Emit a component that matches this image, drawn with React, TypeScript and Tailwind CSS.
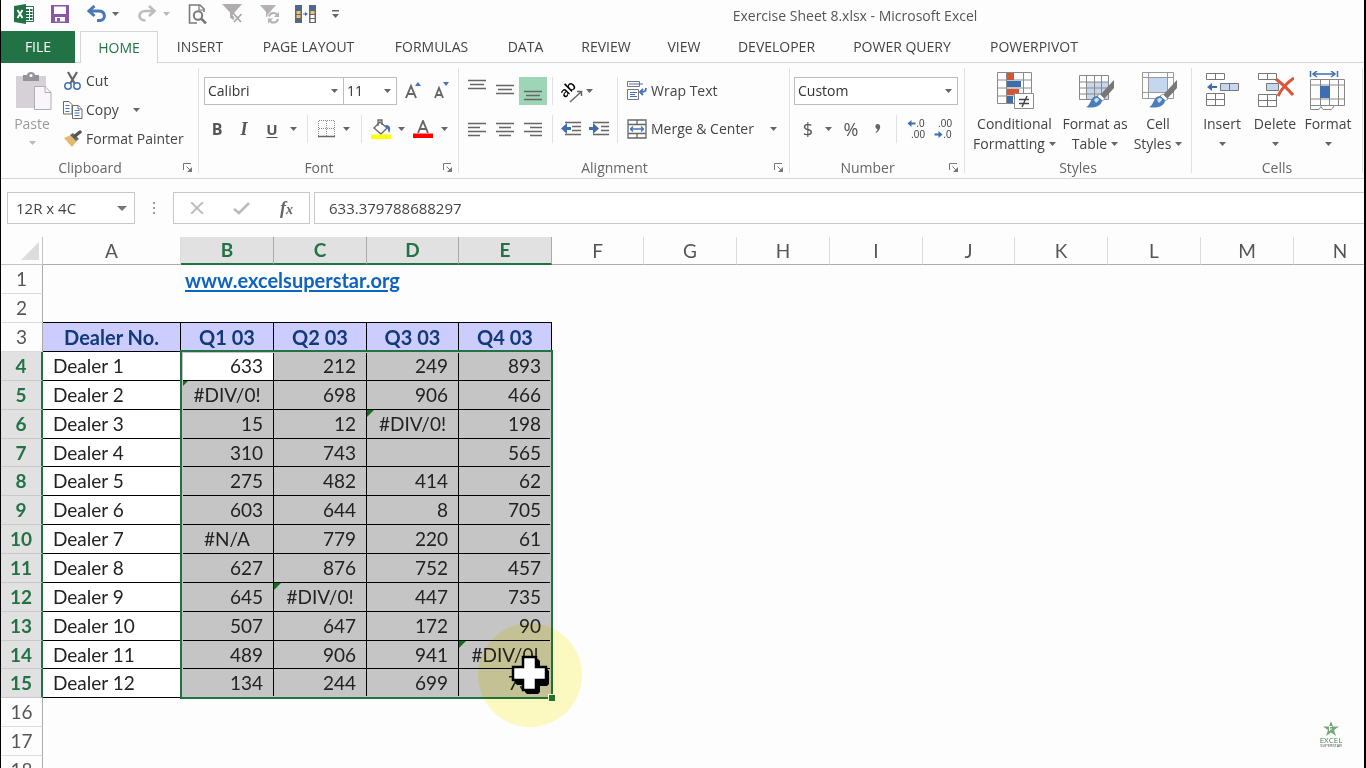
import type { ReactNode } from "react";

const TABS = [
  { label: "INSERT", width: "w-[84px]" },
  { label: "PAGE LAYOUT", width: "w-[133px]" },
  { label: "FORMULAS", width: "w-[113px]" },
  { label: "DATA", width: "w-[75px]" },
  { label: "REVIEW", width: "w-[86px]" },
  { label: "VIEW", width: "w-[70px]" },
  { label: "DEVELOPER", width: "w-[115px]" },
  { label: "POWER QUERY", width: "w-[136px]" },
  { label: "POWERPIVOT", width: "w-[128px]" },
];

const COLUMNS = [
  { name: "A", width: "w-[138px]" },
  { name: "B", width: "w-[93px]" },
  { name: "C", width: "w-[93px]" },
  { name: "D", width: "w-[92px]" },
  { name: "E", width: "w-[93px]" },
  { name: "F", width: "w-[92px]" },
  { name: "G", width: "w-[93px]" },
  { name: "H", width: "w-[93px]" },
  { name: "I", width: "w-[93px]" },
  { name: "J", width: "w-[92px]" },
  { name: "K", width: "w-[93px]" },
  { name: "L", width: "w-[93px]" },
  { name: "M", width: "w-[93px]" },
  { name: "N", width: "w-[93px]" },
];

const DEALERS = [
  ["633", "212", "249", "893"],
  ["#DIV/0!", "698", "906", "466"],
  ["15", "12", "#DIV/0!", "198"],
  ["310", "743", "", "565"],
  ["275", "482", "414", "62"],
  ["603", "644", "8", "705"],
  ["#N/A", "779", "220", "61"],
  ["627", "876", "752", "457"],
  ["645", "#DIV/0!", "447", "735"],
  ["507", "647", "172", "90"],
  ["489", "906", "941", "#DIV/0!"],
  ["134", "244", "699", "735"],
];

const Caret = ({ faded = false }: { faded?: boolean }) => (
  <svg width="7" height="4" viewBox="0 0 7 4" className={faded ? "fill-[#b9b9b9]" : "fill-[#666]"}>
    <path d="M0 0h7L3.5 4z" />
  </svg>
);

const CaretButton = ({ label, width }: { label: string; width: string }) => (
  <button aria-label={label} className={`flex h-7 shrink-0 items-center justify-center ${width}`}>
    <Caret />
  </button>
);

const IconButton = ({ label, className, children }: { label: string; className: string; children: ReactNode }) => (
  <button aria-label={label} className={`flex h-7 shrink-0 items-center justify-center ${className}`}>
    {children}
  </button>
);

const Rule = ({ width }: { width: string }) => (
  <div className={`flex h-7 shrink-0 justify-center ${width}`}>
    <div className="w-px bg-[#e1e1e4]" />
  </div>
);

const Group = ({
  label,
  width,
  launcher = false,
  children,
}: {
  label: string;
  width: string;
  launcher?: boolean;
  children: ReactNode;
}) => (
  <section aria-label={label} className={`flex shrink-0 flex-col ${width}`}>
    <div className="h-[95px]">{children}</div>
    <div className="flex h-5 items-center">
      <div className={`flex-1 text-center text-sm leading-5 text-[#666] ${launcher ? "pr-1" : ""}`}>{label}</div>
      {launcher && (
        <button aria-label={`${label} settings`} className="w-[15px]">
          <svg width="10" height="10" viewBox="0 0 10 10" fill="none" stroke="#777">
            <path d="M.5 7V.5H8M3.5 3.5l4 4" />
            <path d="M9 4v5H4z" fill="#777" stroke="none" />
          </svg>
        </button>
      )}
    </div>
  </section>
);

const Divider = () => <div className="mt-[5px] mb-[5px] w-px shrink-0 bg-[#e1e1e4]" />;

/* Quick access toolbar */

const QuickAccess = () => (
  <div className="flex w-[345px] shrink-0 items-center pb-1">
    <svg className="ml-[13px] shrink-0" width="20" height="20" viewBox="0 0 20 20">
      <path d="M11 2.5h8.500v15H11z" fill="#fff" stroke="#217346" />
      <path d="M12 5h3v2h-3zM16 5h2.500v2H16zM12 8h3v2h-3zM16 8h2.500v2H16zM12 11h3v2h-3zM16 11h2.500v2H16zM12 14h3v2h-3zM16 14h2.500v2H16z" fill="#217346" />
      <path d="M0 2 12 0v20L0 18z" fill="#217346" />
      <path d="M3.500 6 8.500 14M8.500 6 3.500 14" stroke="#fff" strokeWidth="1.800" />
    </svg>
    <button aria-label="Save" className="ml-[17px] shrink-0">
      <svg width="18" height="18" viewBox="0 0 18 18">
        <path d="M0 0h18v18H0z" fill="#8a56a8" />
        <path d="M3 1.500h12V9H3z" fill="#fdfdfe" />
        <path d="M4 12h10v4.500H4z" fill="#fdfdfe" />
        <path d="M6 13h3v3.500H6z" fill="#8a56a8" />
      </svg>
    </button>
    <button aria-label="Undo" className="ml-[18px] shrink-0">
      <svg width="20" height="18" viewBox="0 0 20 18" fill="none" stroke="#4a78b5" strokeWidth="3">
        <path d="M2 6h9.500c7 0 8 8 2 9.500H10" />
        <path d="M7.500 1 2 6l5.500 5" />
      </svg>
    </button>
    <button aria-label="Undo history" className="ml-1 flex w-[9px] shrink-0 justify-center"><Caret /></button>
    <button aria-label="Redo" className="ml-[17px] shrink-0">
      <svg width="20" height="18" viewBox="0 0 20 18" fill="none" stroke="#bcbcbc" strokeWidth="2.600">
        <path d="M17 6H8.500c-8 0-8 9.500 0 9.500" />
        <path d="M12 1l5.500 5-5.500 5" />
      </svg>
    </button>
    <button aria-label="Redo history" className="ml-[5px] flex w-[9px] shrink-0 justify-center"><Caret faded /></button>
    <button aria-label="Print preview" className="ml-[17px] shrink-0">
      <svg width="20" height="20" viewBox="0 0 20 20" fill="none" stroke="#7a7a7a">
        <path d="M16 8V5l-4-4H1.500v18H9" strokeWidth="1.600" />
        <path d="M11 1v5h5" strokeWidth="1.200" />
        <circle cx="10" cy="11.500" r="4.200" strokeWidth="2" />
        <path d="m13 14.500 5 5" strokeWidth="2.600" />
      </svg>
    </button>
    <button aria-label="Clear filter" className="ml-[14px] shrink-0">
      <svg width="22" height="20" viewBox="0 0 22 20">
        <path d="M0 0h20l-7.500 8.500V17L8 13.500v-5z" fill="#b0acb0" />
        <path d="m12 10 7 8M19.500 10 12 18" stroke="#fdfdfe" strokeWidth="4" />
        <path d="m12 10 7 8M19.500 10 12 18" stroke="#a9a6a9" strokeWidth="1.800" />
      </svg>
    </button>
    <button aria-label="Reapply filter" className="ml-4 shrink-0">
      <svg width="21" height="20" viewBox="0 0 21 20">
        <path d="M0 1h16l-6 7v7l-4-2.500V8z" fill="#b5b1b5" />
        <circle cx="13.500" cy="13.500" r="6.500" fill="#fdfdfe" />
        <path d="M9 12.500c1-4.500 7-4.500 8.500-1M18 15c-1 4.500-7 4.500-8.500 1" fill="none" stroke="#b5b1b5" strokeWidth="2" />
        <path d="M19 8v5h-5zM8 19.500v-5h5z" fill="#b5b1b5" />
      </svg>
    </button>
    <button aria-label="Compare columns" className="ml-[14px] shrink-0">
      <svg width="22" height="18" viewBox="0 0 22 18">
        <path d="M0 0h7v18H0zM14 0h7v18h-7z" fill="#666" />
        <path d="M1 1h5v4H1zM15 1h5v4h-5z" fill="#46689b" />
        <path d="M1.500 6h4v3h-4zM1.500 10h4v3h-4zM15.500 6h4v3h-4z" fill="#eac37b" />
        <path d="M1.500 14h4v3h-4z" fill="#46689b" />
        <path d="M15.500 10h4v3h-4zM15.500 14h4v3h-4z" fill="#fff" />
        <path d="M8 8.500h2V7l3 2-3 2V9.500H8z" fill="#3d6fb0" />
      </svg>
    </button>
    <button aria-label="Customize toolbar" className="ml-[14px] shrink-0">
      <svg width="9" height="8" viewBox="0 0 9 8" fill="#666">
        <path d="M1 0h7v1.500H1zM1 4h7L4.500 8z" />
      </svg>
    </button>
  </div>
);

/* Ribbon groups */

const ClipboardGroup = () => (
  <Group label="Clipboard" width="w-[197px]" launcher>
    <div className="flex">
      <button className="flex w-[62px] flex-col items-center pt-[9px] text-sm leading-5 text-[#9a9a9a]">
        <svg className="ml-1" width="36" height="40" viewBox="0 0 36 40">
          <path d="M0 4h30v32H0z" fill="#d5d1d6" />
          <path d="M7 9V3h4c0-4 8-4 8 0h4v6z" fill="#96929a" />
          <circle cx="15" cy="3.500" r="1.500" fill="#fff" />
          <path d="M18.500 14.500H29l6 6v17H18.500z" fill="#faf4fb" stroke="#b2adb4" />
          <path d="M29 14.500v6h6" fill="none" stroke="#b2adb4" />
        </svg>
        <span className="mt-[2px]">Paste</span>
        <span className="mt-[7px]"><Caret faded /></span>
      </button>
      <div className="flex flex-col pt-[3px] text-sm text-[#444]">
        <button className="flex h-[29px] items-center gap-[3px]">
          <svg width="20" height="20" viewBox="0 0 20 20" fill="none">
            <path d="m5 1 7 12M14 1 7 13" stroke="#666" strokeWidth="2.200" />
            <circle cx="5" cy="15" r="3.200" stroke="#4472b8" strokeWidth="1.500" />
            <circle cx="14" cy="15" r="3.200" stroke="#4472b8" strokeWidth="1.500" />
          </svg>
          Cut
        </button>
        <div className="flex h-[29px] items-center">
          <button className="flex items-center gap-[3px]">
            <svg width="20" height="18" viewBox="0 0 20 18" fill="#fff" stroke="#6b6b6b">
              <path d="M.5.500H6l3 3V13H.5z" />
              <path d="M9.500 4.500h6l3.500 3.500v9.500H9.500z" />
              <path d="M15 4.500V8h4" />
              <path d="M2.500 4.500h4M2.500 7.500h4M2.500 10.500h4M11.500 9.500h5M11.500 12h5M11.500 14.500h5" stroke="#4472b8" />
            </svg>
            Copy
          </button>
          <CaretButton label="Copy options" width="ml-[6px] w-6" />
        </div>
        <button className="flex h-[29px] items-center gap-[3px] whitespace-nowrap">
          <svg width="20" height="18" viewBox="0 0 20 18">
            <path d="m1 8 7-3 6 6-5 6z" fill="#e5b96c" />
            <path d="m7 5 3-2 6 6-3 2z" fill="#666" />
            <path d="m12 6 5-4" stroke="#555" strokeWidth="3.500" strokeLinecap="round" />
          </svg>
          Format Painter
        </button>
      </div>
    </div>
  </Group>
);

const FontGroup = () => (
  <Group label="Font" width="w-[259px]" launcher>
    <div className="flex flex-col gap-[10px] pt-[14px] pl-[5px] text-[#555]">
      <div className="flex items-center">
        <Picker label="Font name" value="Calibri" width="w-[140px]" />
        <Picker label="Font size" value="11" width="-ml-px w-[54px]" />
        <IconButton label="Increase font size" className="ml-[3px] w-7">
          <svg width="18" height="18" viewBox="0 0 18 18" fill="none">
            <path d="M1 16 6 4l5 12M3 12h6" stroke="#666" strokeWidth="1.900" />
            <path d="M10 4h6l-3-4z" fill="#4472b8" />
          </svg>
        </IconButton>
        <IconButton label="Decrease font size" className="w-7">
          <svg width="18" height="18" viewBox="0 0 18 18" fill="none">
            <path d="M2 16 6 6l4 10M3.500 13h5" stroke="#666" strokeWidth="1.800" />
            <path d="M10 0h6l-3 4z" fill="#4472b8" />
          </svg>
        </IconButton>
      </div>
      <div className="flex items-center">
        <IconButton label="Bold" className="w-[26px] text-base font-bold">B</IconButton>
        <IconButton label="Italic" className="w-7 font-['Liberation_Serif',serif] text-lg font-bold italic">I</IconButton>
        <IconButton label="Underline" className="w-7 text-[15px] font-bold underline underline-offset-2">U</IconButton>
        <CaretButton label="Underline style" width="w-[14px]" />
        <Rule width="w-[14px]" />
        <IconButton label="Borders" className="w-[25px]">
          <svg width="18" height="18" viewBox="0 0 18 18" fill="none" stroke="#888">
            <path d="M.5 1v15M8.500 1v15M16.500 1v15M1 .5h16M1 8.500h16" strokeDasharray="1 1" />
            <path d="M0 16.500h17" stroke="#666" strokeWidth="1.500" />
          </svg>
        </IconButton>
        <CaretButton label="Border style" width="w-[15px]" />
        <Rule width="w-[14px]" />
        <IconButton label="Fill color" className="w-[26px]">
          <svg width="20" height="20" viewBox="0 0 20 20">
            <path d="M3 9 9 3l7 6-6 6z" fill="#fff" stroke="#666" strokeWidth="1.300" />
            <path d="M7 7V1h4v5" fill="none" stroke="#666" strokeWidth="1.300" />
            <path d="M14 6c6-1 6 5 4 8-1-4-2-5-4-8z" fill="#4472b8" />
            <path d="M0 15.500h20V20H0z" fill="#ff0" />
          </svg>
        </IconButton>
        <CaretButton label="Fill color options" width="w-[14px]" />
        <IconButton label="Font color" className="w-[30px]">
          <svg width="20" height="18" viewBox="0 0 20 18">
            <path d="m5 13 5-12 5 12M7 9h6" fill="none" stroke="#666" strokeWidth="1.900" />
            <path d="M0 13.500h20V18H0z" fill="red" />
          </svg>
        </IconButton>
        <CaretButton label="Font color options" width="w-[12px]" />
      </div>
    </div>
  </Group>
);

const Picker = ({ label, value, width }: { label: string; value: string; width: string }) => (
  <div className={`relative h-7 shrink-0 ${width}`}>
    <select aria-label={label} className="h-full w-full appearance-none border border-[#bdbdbd] bg-white pl-[3px] text-sm text-[#333]">
      <option>{value}</option>
    </select>
    <span className="pointer-events-none absolute top-3 right-[6px]"><Caret /></span>
  </div>
);

const Lines = ({ d }: { d: string }) => (
  <svg width="18" height="16" viewBox="0 0 18 16" stroke="#666" strokeWidth="1.300">
    <path d={d} />
  </svg>
);

const AlignmentGroup = () => (
  <Group label="Alignment" width="w-[330px]" launcher>
    <div className="flex pt-[14px] pl-1">
      <div className="flex w-[148px] flex-col gap-[10px]">
        <div className="flex">
          <IconButton label="Top align" className="w-7 pb-3"><Lines d="M0 3.500h18M2 7.500h14M0 11.500h18" /></IconButton>
          <IconButton label="Middle align" className="w-7 pb-1"><Lines d="M0 4.500h18M2 8.500h14M0 12.500h18" /></IconButton>
          <IconButton label="Bottom align" className="w-7 bg-[#9fd5b7] pt-2"><Lines d="M0 4.500h18M2 8.500h14M0 12.500h18" /></IconButton>
          <Rule width="w-[10px]" />
          <IconButton label="Orientation" className="w-7">
            <div className="relative flex size-6 items-center">
              <span className="-mt-1 -rotate-45 text-sm leading-4 font-semibold">ab</span>
              <svg className="absolute right-0 bottom-0" width="15" height="14" viewBox="0 0 15 14">
                <path d="M2 13 13 3M9 2.500h4.500V7" fill="none" stroke="#666" strokeWidth="1.500" />
              </svg>
            </div>
          </IconButton>
          <CaretButton label="Orientation options" width="w-2" />
        </div>
        <div className="flex">
          <IconButton label="Align left" className="w-7"><Lines d="M0 2.500h18M0 6.500h12M0 10.500h18M0 14.500h12" /></IconButton>
          <IconButton label="Center" className="w-7"><Lines d="M0 2.500h18M3 6.500h12M0 10.500h18M3 14.500h12" /></IconButton>
          <IconButton label="Align right" className="w-7"><Lines d="M0 2.500h18M6 6.500h12M0 10.500h18M6 14.500h12" /></IconButton>
          <Rule width="w-[10px]" />
          <IconButton label="Decrease indent" className="w-7">
            <svg width="20" height="16" viewBox="0 0 20 16">
              <path d="M4 1.500h16M11 5.500h9M11 9.500h9M4 13.500h16" stroke="#666" strokeWidth="1.300" />
              <path d="M0 7.500 6 2v4h4v3H6v4z" fill="#3d6fb0" />
            </svg>
          </IconButton>
          <IconButton label="Increase indent" className="w-7">
            <svg width="20" height="16" viewBox="0 0 20 16">
              <path d="M4 1.500h16M12 5.500h8M12 9.500h8M4 13.500h16" stroke="#666" strokeWidth="1.300" />
              <path d="M10 7.500 4 2v4H0v3h4v4z" fill="#3d6fb0" />
            </svg>
          </IconButton>
        </div>
      </div>
      <div className="mr-[9px] ml-[6px] w-px bg-[#e1e1e4]" />
      <div className="flex flex-col gap-[10px] text-sm text-[#444]">
        <button className="flex h-7 items-center gap-1">
          <svg width="20" height="20" viewBox="0 0 20 20" fill="none" stroke="#777">
            <path d="M.5.500h12v5H.5zM.5 8.500h11v10H.5z" />
            <path d="M2 3h14M3 11.500h7M3 13.500h5M3 15.500h7" stroke="#4472b8" />
            <path d="M19 7c0 4-2 4-6 4m3-3-3 3 3 3" stroke="#4472b8" strokeWidth="1.800" />
          </svg>
          Wrap Text
        </button>
        <div className="flex items-center">
          <button className="flex h-7 items-center gap-1 whitespace-nowrap">
            <svg width="20" height="20" viewBox="0 0 20 20" fill="none" stroke="#666" strokeWidth="1.300">
              <path d="M1 1h18v18H1zM1 5.500h18M1 14.500h18M10 1v4.500M10 14.500V19" />
              <path d="M3 10h14M6 7.500 3.500 10 6 12.500M14 7.500l2.500 2.500-2.500 2.500" stroke="#4472b8" />
            </svg>
            Merge &amp; Center
          </button>
          <CaretButton label="Merge options" width="ml-2 w-6" />
        </div>
      </div>
    </div>
  </Group>
);

const NumberGroup = () => (
  <Group label="Number" width="w-[174px]" launcher>
    <div className="flex flex-col gap-[10px] pt-[14px] pl-1 text-[#555]">
      <Picker label="Number format" value="Custom" width="w-[164px]" />
      <div className="flex items-center">
        <IconButton label="Currency" className="w-7 text-lg">$</IconButton>
        <CaretButton label="Currency options" width="w-3" />
        <IconButton label="Percent" className="w-[34px] text-lg">%</IconButton>
        <IconButton label="Comma style" className="w-5">
          <svg width="6" height="9" viewBox="0 0 7 11" className="mb-[2px] fill-[#666]">
            <path d="M3 0c4 0 5 6-1.500 11L.5 10c2-1.500 2.500-3 2-4C-.5 6-.5 0 3 0z" />
          </svg>
        </IconButton>
        <Rule width="w-4" />
        <IconButton label="Increase decimal" className="w-6 flex-col font-['Liberation_Sans',sans-serif] text-[10px] text-[#444]">
          <span className="flex items-center leading-[11px]">
            <svg width="9" height="7" viewBox="0 0 8 7" className="fill-[#3d6fb0]"><path d="m0 3.500 4-3.500v2.500h4v2H4V7z" /></svg>
            .0
          </span>
          <span className="pl-1 leading-[11px]">.00</span>
        </IconButton>
        <IconButton label="Decrease decimal" className="w-[30px] flex-col font-['Liberation_Sans',sans-serif] text-[10px] text-[#444]">
          <span className="pl-1 leading-[11px]">.00</span>
          <span className="flex items-center leading-[11px]">
            <svg width="9" height="7" viewBox="0 0 8 7" className="fill-[#3d6fb0]"><path d="M8 3.500 4 0v2.500H0v2h4V7z" /></svg>
            .0
          </span>
        </IconButton>
      </div>
    </div>
  </Group>
);

const Brush = () => (
  <>
    <path d="m22 24 13-14 1-1v8L26 28z" fill="#777" />
    <path d="m22 23 5 5-3 2-5-5z" fill="#fff" stroke="#888" strokeWidth=".8" />
    <path d="M8 36c5-1 4-11 11-11l5 4c0 6-8 9-16 7z" fill="#4a7ebb" />
    <path d="M16 29c2-3 5-2 5 0l-3 3z" fill="#cfe0f2" />
  </>
);

const BigButton = ({ width, lines, icon }: { width: string; lines: [string, string?]; icon: ReactNode }) => (
  <button className={`flex shrink-0 flex-col items-center pt-2 text-sm leading-5 whitespace-nowrap text-[#444] ${width}`}>
    <svg width="38" height="40" viewBox="0 0 38 40" fill="none">{icon}</svg>
    <span className="mt-[3px]">{lines[0]}</span>
    <span className="flex h-5 items-center gap-1">
      {lines[1]}
      <Caret />
    </span>
  </button>
);

const StylesGroup = () => (
  <Group label="Styles" width="w-[226px]">
    <div className="flex">
      <BigButton
        width="w-[99px]"
        lines={["Conditional", "Formatting"]}
        icon={
          <>
            <path d="M1.500 1.500h34v31h-34zM1.500 9h34M1.500 17h34M1.500 25h34M10.500 1.500v31M27.500 1.500v31" fill="#fff" stroke="#8a8a8a" />
            <path d="M11 2h7v7h-7zM11 18h12v6H11z" fill="#d65532" />
            <path d="M11 10h14v6H11zM11 25h6v7h-6z" fill="#3d6fb0" />
            <path d="M18.500 22.500h19v15h-19z" fill="#fff" stroke="#8a8a8a" />
            <path d="M23 28.500h10M23 32.500h10M31 25l-5 11" stroke="#444" strokeWidth="1.400" />
          </>
        }
      />
      <BigButton
        width="w-[62px]"
        lines={["Format as", "Table"]}
        icon={
          <g transform="translate(2 0)">
            <path d="M9 11h22v17H9z" fill="#c5d7ee" />
            <path d="M1.500 4.500h29v24h-29zM1.500 11h29M1.500 17h29M1.500 23h29M8.500 4v24M16.500 4v24M23.500 4v24" stroke="#888" />
            <Brush />
          </g>
        }
      />
      <BigButton
        width="w-[64px]"
        lines={["Cell", "Styles"]}
        icon={
          <g transform="translate(2 0)">
            <path d="M1.500 1.500h31v26h-31zM1.500 6.500h31M1.500 21.500h31M7.500 1v26M26.500 1v26" stroke="#999" />
            <path d="M8 7h18v14H8z" fill="#c5d7ee" />
            <Brush />
          </g>
        }
      />
    </div>
  </Group>
);

const CellsGroup = () => (
  <Group label="Cells" width="w-[170px]">
    <div className="flex pl-[3px]">
      <BigButton
        width="w-[54px]"
        lines={["Insert"]}
        icon={
          <>
            <path d="M3.500 2.500h18v6h-18zM12.500 2v6M3.500 22.500h18v12h-18zM12.500 22v12M3.500 28.500h18" fill="#fff" stroke="#777" />
            <path d="M17.500 12.500h18v7h-18zM26.500 12v7" fill="#c5d7ee" stroke="#777" />
            <path d="m4 16 5-4v3h5v2H9v3z" fill="#3d6fb0" />
          </>
        }
      />
      <BigButton
        width="w-[52px]"
        lines={["Delete"]}
        icon={
          <>
            <path d="M2.500 2.500h18v6h-18zM11.500 2v6M2.500 23.500h18v12h-18zM11.500 23v12M2.500 29.500h18" fill="#fff" stroke="#777" />
            <path d="M10.500 12.500h12v7h-12z" fill="#c5d7ee" stroke="#777" />
            <path d="M20 8c5 4 11 9 17 16M38 7c-6 4-12 10-16 18" stroke="#d9583a" strokeWidth="3" />
          </>
        }
      />
      <BigButton
        width="w-[54px]"
        lines={["Format"]}
        icon={
          <>
            <path d="M1.500 0v6M28.500 0v6M4 3h22M8 0 4 3l4 3M22 0l4 3-4 3" stroke="#3d6fb0" strokeWidth="1.500" />
            <path d="M1.500 8.500h34v26h-10l-3 4H14l-2-3-2 3H1.500zM1.500 14h34M1.500 28h34M1.500 34.500h24M11.500 8v26M20.500 8v26M29.500 8v26" stroke="#888" />
            <path d="M11 15h10v12H11z" fill="#3d6fb0" />
          </>
        }
      />
    </div>
  </Group>
);

const FormulaBar = () => (
  <div className="flex h-[58px] items-start pt-[13px]">
    <div className="ml-[6px] flex h-8 w-32 shrink-0 items-center border border-[#c8c8c8] bg-white pr-[7px]">
      <input aria-label="Name box" defaultValue="12R x 4C" className="w-full min-w-0 pl-2 text-[15px] text-[#444] outline-none" />
      <button aria-label="Named ranges">
        <svg width="10" height="5" viewBox="0 0 10 5" fill="#777"><path d="M0 0h10L5 5z" /></svg>
      </button>
    </div>
    <div className="flex h-8 w-[38px] shrink-0 flex-col items-center justify-center gap-[3px]">
      <div className="size-[2px] bg-[#999]" />
      <div className="size-[2px] bg-[#999]" />
      <div className="size-[2px] bg-[#999]" />
    </div>
    <div className="flex h-8 w-[137px] shrink-0 items-center border border-[#c8c8c8] bg-white">
      <IconButton label="Cancel" className="w-[45px]">
        <svg width="14" height="12" viewBox="0 0 14 12" stroke="#bbb" strokeWidth="1.800"><path d="m1 0 12 12M13 0 1 12" /></svg>
      </IconButton>
      <IconButton label="Enter" className="w-[45px]">
        <svg width="17" height="13" viewBox="0 0 17 13" fill="none" stroke="#bbb" strokeWidth="2.600"><path d="m1 7 5 4L16 1" /></svg>
      </IconButton>
      <IconButton label="Insert function" className="w-[45px] font-['Liberation_Serif',serif] text-lg font-bold text-[#666] italic">
        f<span className="pt-1 text-sm">x</span>
      </IconButton>
    </div>
    <input
      aria-label="Formula"
      defaultValue="633.379788688297"
      className="ml-1 h-8 min-w-0 flex-1 border border-r-0 border-[#c8c8c8] bg-white pl-[14px] text-[15px] text-[#444] outline-none"
    />
  </div>
);

/* Sheet */

const cellStyle = (value: string) => (value.startsWith("#") ? "text-center" : "pr-[10px] text-right");

const RowHeader = ({ row }: { row: number }) => {
  const selected = row >= 4 && row <= 15;
  return (
    <th
      scope="row"
      className={
        selected
          ? "border-r-2 border-b border-r-[#217346] border-b-[#c9c9c9] bg-[#e1e1e1] p-0 font-bold text-[#217346]"
          : "border-r border-b border-r-[#ababab] border-b-[#dcdcdc] p-0 font-normal text-[#555]"
      }
    >
      {row}
    </th>
  );
};

const SheetRow = ({ row }: { row: number }) => {
  const height = row % 7 === 0 ? "h-7" : "h-[29px]";
  if (row === 1) {
    return (
      <tr className={height}>
        <RowHeader row={row} />
        <td />
        <td colSpan={3} className="p-0 pl-1 text-xl leading-6 font-bold text-[#0f63c0]">
          <a href="#site" className="underline underline-offset-2">www.excelsuperstar.org</a>
        </td>
      </tr>
    );
  }
  if (row === 2) {
    return (
      <tr className={height}>
        <RowHeader row={row} />
        <td colSpan={5} className="border-b border-black p-0" />
      </tr>
    );
  }
  if (row === 3) {
    return (
      <tr className={height}>
        <RowHeader row={row} />
        {["Dealer No.", "Q1 03", "Q2 03", "Q3 03", "Q4 03"].map((title) => (
          <td key={title} className="border-r border-b border-black bg-[#ccccff] p-0 text-center text-xl leading-6 font-bold text-[#123a78]">
            {title}
          </td>
        ))}
      </tr>
    );
  }
  const values = DEALERS[row - 4];
  if (!values) {
    return (
      <tr className={height}>
        <RowHeader row={row} />
      </tr>
    );
  }
  return (
    <tr className={height}>
      <RowHeader row={row} />
      <td className="border-r border-b border-black bg-white p-0 pl-[10px]">Dealer {row - 3}</td>
      {values.map((value, i) => (
        <td
          key={i}
          className={`relative border-r border-b border-black p-0 ${cellStyle(value)} ${row === 4 && i === 0 ? "bg-white" : "bg-[#c6c5c6]"}`}
        >
          {value === "#DIV/0!" && (
            <svg className="absolute top-0 left-0" width="7" height="7" viewBox="0 0 7 7"><path d="M0 0h7L0 7z" fill="#10701f" /></svg>
          )}
          {value}
        </td>
      ))}
    </tr>
  );
};

const Sheet = () => (
  <main className="relative min-h-0 flex-1 overflow-hidden font-[Lato,sans-serif] text-[19px] leading-6 text-[#222]">
    <table className="w-[1386px] table-fixed border-separate border-spacing-0">
      <colgroup>
        <col className="w-[42px]" />
        {COLUMNS.map((column) => <col key={column.name} className={column.width} />)}
      </colgroup>
      <thead>
        <tr className="h-7">
          <th aria-label="Select all" className="border-r border-b border-[#c4c4c4] p-0">
            <svg className="ml-5" width="18" height="18" viewBox="0 0 18 18"><path d="M18 0v18H0z" fill="#dcdcdc" /></svg>
          </th>
          {COLUMNS.map(({ name }) => (
            <th
              key={name}
              scope="col"
              className={
                "BCDE".includes(name)
                  ? "border-r border-b-2 border-r-[#aaa] border-b-[#217346] bg-[#e1e1e1] p-0 text-[#217346]"
                  : "border-r border-b border-r-[#dcdcdc] border-b-[#ababab] p-0 font-normal text-[#555]"
              }
            >
              {name}
            </th>
          ))}
        </tr>
      </thead>
      <tbody>
        {Array.from({ length: 18 }, (_, i) => <SheetRow key={i} row={i + 1} />)}
      </tbody>
    </table>

    {/* selection frame with its fill handle */}
    <div className="pointer-events-none absolute top-[113px] left-[179px] h-[349px] w-[373px] border-2 border-[#217346] inset-ring-1 inset-ring-[#c6c5c6]">
      <div className="absolute -right-1 -bottom-1 size-[7px] border-t border-l border-white bg-[#217346]" />
    </div>

    {/* pointer highlight */}
    <div className="pointer-events-none absolute top-[386px] left-[477px] size-[104px] rounded-full bg-[#fdfbc0] mix-blend-multiply" />
    <svg className="pointer-events-none absolute top-[418px] left-[510px]" width="40" height="40" viewBox="0 0 40 40">
      <path d="M14 4h13l2 2v8h7l2 2v13l-2 2h-7v6l-2 2H16l-2-2v-7H6l-2-2V15h10z" fill="#000" />
      <path d="M12 2h13v10h10v13H25v10H12V25H2V12h10z" fill="#fff" stroke="#000" strokeWidth="2.500" />
    </svg>

    <div className="absolute right-[18px] bottom-[20px] flex w-[30px] flex-col items-center font-['Open_Sans',sans-serif]">
      <svg width="16" height="15" viewBox="0 0 16 15">
        <path d="m8 0 2 5.500h6l-5 3.500 2 6-5-3.500L3 15l2-6-5-3.500h6z" fill="#74a878" />
        <path d="M6 5.500h3M6 8h3M6.500 5v5" stroke="#fff" />
      </svg>
      <span className="text-[8px] leading-2 text-[#3e8a48]">EXCEL</span>
      <span className="text-[4px] leading-1 text-[#444]">SUPERSTAR</span>
    </div>
  </main>
);

export default function App() {
  return (
    <div className="flex h-screen flex-col overflow-hidden border-r-2 border-l border-black bg-[#fdfdfe] font-['Open_Sans','Noto_Sans',sans-serif]">
      <header className="flex h-[31px] shrink-0">
        <QuickAccess />
        <h1 className="flex-1 text-center text-sm leading-8 text-[#555]">Exercise Sheet 8.xlsx - Microsoft Excel</h1>
      </header>

      <nav className="flex h-8 shrink-0 text-sm text-[#444]">
        <button className="w-[74px] shrink-0 bg-[#217346] text-white">FILE</button>
        <div className="w-[5px] shrink-0 border-b border-[#d5d5d5]" />
        <button className="w-[78px] shrink-0 border border-b-0 border-[#d5d5d5] text-[#217346]">HOME</button>
        {TABS.map((tab) => (
          <button key={tab.label} className={`shrink-0 border-b border-[#d5d5d5] whitespace-nowrap ${tab.width}`}>
            {tab.label}
          </button>
        ))}
        <div className="flex-1 border-b border-[#d5d5d5]" />
      </nav>

      <div className="flex h-[116px] shrink-0 border-b border-[#d5d5d5]">
        <ClipboardGroup />
        <Divider />
        <FontGroup />
        <Divider />
        <AlignmentGroup />
        <Divider />
        <NumberGroup />
        <Divider />
        <StylesGroup />
        <Divider />
        <CellsGroup />
        <Divider />
      </div>

      <FormulaBar />
      <Sheet />
    </div>
  );
}
